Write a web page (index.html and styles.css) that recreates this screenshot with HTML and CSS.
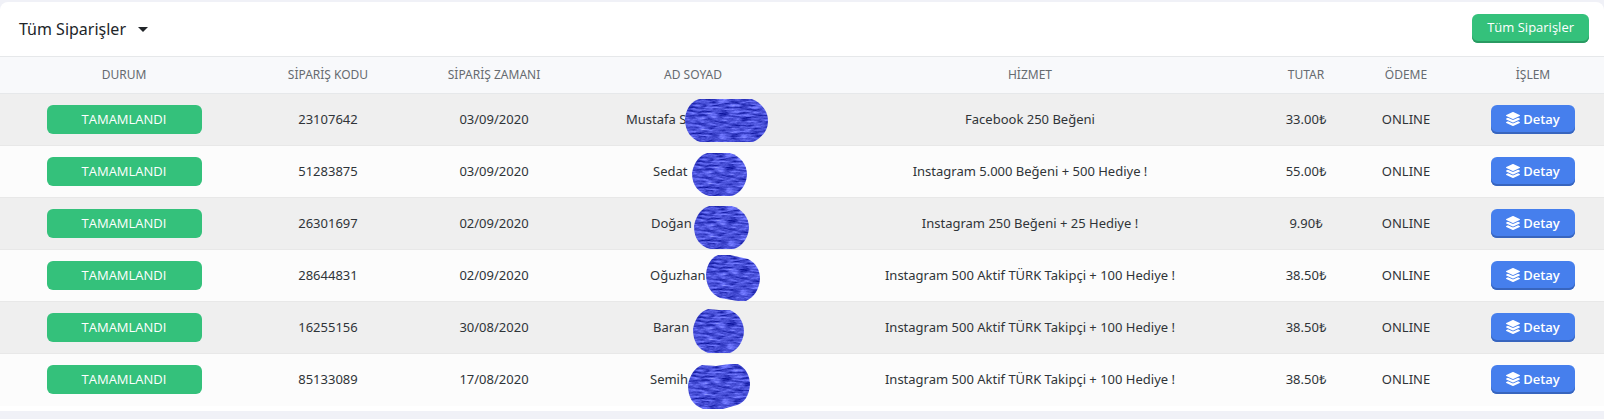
FILE: index.html
```html
<!DOCTYPE html>
<html lang="tr">
<head>
  <meta charset="UTF-8">
  <meta name="viewport" content="width=device-width, initial-scale=1.0">
  <title>Tüm Siparişler</title>
  <link rel="stylesheet" href="styles.css">
</head>
<body>
  <svg class="defs" width="0" height="0" aria-hidden="true">
    <defs>
      <filter id="ink" x="0" y="0" width="100%" height="100%" color-interpolation-filters="sRGB">
        <feTurbulence type="fractalNoise" baseFrequency="0.09 0.5" numOctaves="4" seed="4" result="noise"/>
        <feColorMatrix in="noise" values="0.7 0 0 0 -0.07  0.7 0 0 0 -0.04  0.7 0 0 0 0.49  0 0 0 0 1"/>
        <feComposite in2="SourceGraphic" operator="in"/>
      </filter>
      <symbol id="layers" viewBox="0 0 512 512">
        <path d="M12.4 148l232.9 105.7c6.8 3.1 14.500 3.100 21.300 0L499.500 148c16.600-7.500 16.600-32.500 0-40L266.600 2.300a25.600 25.600 0 0 0-21.300 0L12.400 108c-16.500 7.500-16.500 32.500 0 40z"/>
        <path d="M499.600 236.300l-58.100-26.300-161.600 73.300c-15.100 6.800-32.700 6.800-47.800 0L70.500 210l-58.100 26.300c-16.500 7.500-16.500 32.500 0 40l232.900 105.600c6.800 3.100 14.500 3.100 21.300 0l233-105.600c16.600-7.500 16.600-32.500 0-40z"/>
        <path d="M499.600 364.100l-57.900-26.200-161.800 73.300c-15.100 6.800-32.700 6.800-47.800 0L70.300 337.900l-57.900 26.200c-16.500 7.500-16.500 32.500 0 40l232.900 105.600c6.800 3.100 14.500 3.100 21.300 0l233-105.600c16.600-7.500 16.600-32.500 0-40z"/>
      </symbol>
    </defs>
  </svg>

  <main class="card">
    <div class="card-header">
      <button type="button" class="dropdown">Tüm Siparişler</button>
      <a href="#" class="btn btn-success">Tüm Siparişler</a>
    </div>
    <table class="orders">
      <colgroup>
        <col class="col-status">
        <col class="col-code">
        <col class="col-date">
        <col class="col-name">
        <col>
        <col class="col-price">
        <col class="col-payment">
        <col class="col-action">
      </colgroup>
      <thead>
        <tr>
          <th>DURUM</th>
          <th>SİPARİŞ KODU</th>
          <th>SİPARİŞ ZAMANI</th>
          <th>AD SOYAD</th>
          <th>HİZMET</th>
          <th>TUTAR</th>
          <th>ÖDEME</th>
          <th>İŞLEM</th>
        </tr>
      </thead>
      <tbody>
        <tr>
          <td><span class="badge">TAMAMLANDI</span></td>
          <td>23107642</td>
          <td>03/09/2020</td>
          <td><span class="name name-mustafa">Mustafa S<svg width="83" height="43"><path filter="url(#ink)" d="M14 0H67C74 3 83 10 83 22C83 33 75 40 68 43H15C6 40 0 32 0 20C1 9 6 3 14 0Z"/></svg></span></td>
          <td>Facebook 250 Beğeni</td>
          <td>33.00₺</td>
          <td>ONLINE</td>
          <td><a href="#" class="btn btn-primary"><svg width="14" height="14"><use href="#layers"/></svg> Detay</a></td>
        </tr>
        <tr>
          <td><span class="badge">TAMAMLANDI</span></td>
          <td>51283875</td>
          <td>03/09/2020</td>
          <td><span class="name name-sedat">Sedat<svg width="55" height="43"><path filter="url(#ink)" d="M15 0H38C48 3 55 11 55 22C54 33 48 40 40 43H17C7 40 0 33 0 20C2 9 7 3 15 0Z"/></svg></span></td>
          <td>Instagram 5.000 Beğeni + 500 Hediye !</td>
          <td>55.00₺</td>
          <td>ONLINE</td>
          <td><a href="#" class="btn btn-primary"><svg width="14" height="14"><use href="#layers"/></svg> Detay</a></td>
        </tr>
        <tr>
          <td><span class="badge">TAMAMLANDI</span></td>
          <td>26301697</td>
          <td>02/09/2020</td>
          <td><span class="name name-dogan">Doğan<svg width="55" height="43"><path filter="url(#ink)" d="M15 0H38C48 3 55 11 55 22C54 33 48 40 40 43H16C6 40 0 33 0 20C2 9 7 3 15 0Z"/></svg></span></td>
          <td>Instagram 250 Beğeni + 25 Hediye !</td>
          <td>9.90₺</td>
          <td>ONLINE</td>
          <td><a href="#" class="btn btn-primary"><svg width="14" height="14"><use href="#layers"/></svg> Detay</a></td>
        </tr>
        <tr>
          <td><span class="badge">TAMAMLANDI</span></td>
          <td>28644831</td>
          <td>02/09/2020</td>
          <td><span class="name name-oguzhan">Oğuzhan<svg width="54" height="46"><path filter="url(#ink)" d="M12 0H24L42 4C50 8 54 15 54 24C53 35 48 42 40 46H32L14 43C5 39 0 31 0 19C1 9 5 3 12 0Z"/></svg></span></td>
          <td>Instagram 500 Aktif TÜRK Takipçi + 100 Hediye !</td>
          <td>38.50₺</td>
          <td>ONLINE</td>
          <td><a href="#" class="btn btn-primary"><svg width="14" height="14"><use href="#layers"/></svg> Detay</a></td>
        </tr>
        <tr>
          <td><span class="badge">TAMAMLANDI</span></td>
          <td>16255156</td>
          <td>30/08/2020</td>
          <td><span class="name name-baran">Baran<svg width="51" height="44"><path filter="url(#ink)" d="M15 0L26 1L37 1C46 5 51 13 51 23C50 34 44 41 37 44H15C5 40 0 33 0 20C2 9 7 3 15 0Z"/></svg></span></td>
          <td>Instagram 500 Aktif TÜRK Takipçi + 100 Hediye !</td>
          <td>38.50₺</td>
          <td>ONLINE</td>
          <td><a href="#" class="btn btn-primary"><svg width="14" height="14"><use href="#layers"/></svg> Detay</a></td>
        </tr>
        <tr>
          <td><span class="badge">TAMAMLANDI</span></td>
          <td>85133089</td>
          <td>17/08/2020</td>
          <td><span class="name name-semih">Semih<svg width="62" height="45"><path filter="url(#ink)" d="M14 1L28 2L41 0H50C58 4 62 12 62 21C61 32 56 39 49 41L35 45H15C5 41 0 34 0 21C2 10 7 4 14 1Z"/></svg></span></td>
          <td>Instagram 500 Aktif TÜRK Takipçi + 100 Hediye !</td>
          <td>38.50₺</td>
          <td>ONLINE</td>
          <td><a href="#" class="btn btn-primary"><svg width="14" height="14"><use href="#layers"/></svg> Detay</a></td>
        </tr>
      </tbody>
    </table>
  </main>
</body>
</html>
```

FILE: styles.css
```css
* {
  box-sizing: border-box;
}
body {
  margin: 0;
  padding: 2px 0 8px;
  background-color: #f0f1f7;
  font-family: "Noto Sans", "Open Sans", sans-serif;
  font-size: 13px;
  color: #2f3438;
}
.defs {
  position: absolute;
}
.card {
  background-color: #fff;
  border-radius: 8px 8px 0 0;
  padding-bottom: 5px;
}
.card-header {
  display: flex;
  align-items: center;
  justify-content: space-between;
  height: 55px;
  padding: 0 15px 2px 19px;
  border-bottom: 1px solid #e6e8ea;
}
.dropdown {
  display: flex;
  align-items: center;
  gap: 12px;
  padding: 2px 0 0;
  border: 0;
  background: none;
  font-family: inherit;
  font-size: 16px;
  line-height: 24px;
  color: #212529;
}
.dropdown::after {
  content: "";
  border-top: 5px solid;
  border-right: 5px solid transparent;
  border-left: 5px solid transparent;
}
.btn {
  display: inline-flex;
  align-items: center;
  justify-content: center;
  gap: 3px;
  height: 29px;
  padding: 0 15px 2px;
  border-radius: 6px;
  color: #fff;
  font-family: "Open Sans", sans-serif;
  line-height: 20px;
  text-decoration: none;
  vertical-align: middle;
}
.btn-success {
  background-color: #34c17b;
  box-shadow: inset 0 -2px #2a9a62;
}
.btn-primary {
  background-color: #467fed;
  box-shadow: inset 0 -2px #3865be;
  font-weight: 600;
}
.btn svg {
  fill: #fff;
}
.orders {
  width: 100%;
  table-layout: fixed;
  border-collapse: separate;
  border-spacing: 0;
  text-align: center;
}
.col-status {
  width: 248px;
}
.col-code {
  width: 160px;
}
.col-date {
  width: 172px;
}
.col-name {
  width: 226px;
}
.col-price {
  width: 104px;
}
.col-payment {
  width: 96px;
}
.col-action {
  width: 150px;
}
.orders th {
  height: 37px;
  padding: 0 0 2px;
  background-color: #f8f9fb;
  border-bottom: 1px solid #e6e8ea;
  font-size: 12px;
  font-weight: 400;
  color: #666b70;
}
.orders td {
  height: 52px;
  padding: 0 0 2px;
  background-color: #fcfcfc;
  border-bottom: 1px solid #e8e8e8;
  line-height: 20px;
}
.orders tbody tr:nth-child(odd) td {
  background-color: #efefef;
}
.orders tbody tr:last-child td {
  border-bottom-color: #fcfcfc;
}
.orders td:first-child {
  padding: 0;
}
.orders th:last-child {
  padding-left: 8px;
}
.orders td:last-child {
  padding: 0 0 0 8px;
}
.badge {
  display: inline-block;
  width: 155px;
  border-radius: 6px;
  background-color: #34c17b;
  color: #fff;
  font-family: "Open Sans", sans-serif;
  line-height: 29px;
  vertical-align: middle;
}
/* names keep their full width, the surname is painted over */
.name {
  display: inline-block;
  position: relative;
  width: 84px;
  text-align: left;
}
.name svg {
  position: absolute;
}
.name-mustafa {
  width: 134px;
}
.name-mustafa svg {
  top: -10px;
  left: 59px;
}
.name-sedat {
  width: 80px;
}
.name-sedat svg {
  top: -8px;
  left: 39px;
}
.name-dogan svg {
  top: -7px;
  left: 43px;
}
.name-oguzhan {
  width: 86px;
}
.name-oguzhan svg {
  top: -10px;
  left: 56px;
}
.name-baran {
  width: 80px;
}
.name-baran svg {
  top: -8px;
  left: 40px;
}
.name-semih {
  width: 86px;
}
.name-semih svg {
  top: -5px;
  left: 38px;
}
```
